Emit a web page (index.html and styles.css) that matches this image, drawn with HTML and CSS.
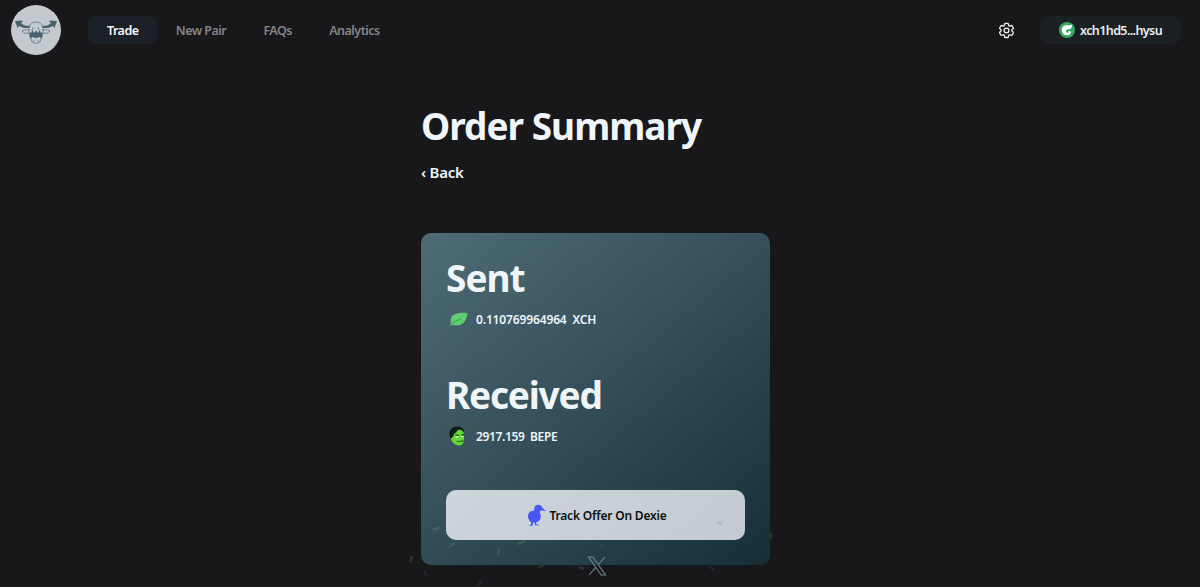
FILE: index.html
```
<!DOCTYPE html>
<html lang="en">
<head>
<meta charset="utf-8">
<title>Order Summary</title>
<link rel="stylesheet" href="styles.css">
</head>
<body>
<header class="topbar">
  <svg class="logo" viewBox="0 0 50 50">
    <circle cx="25" cy="25" r="25" fill="#c3c9cd"/>
    <g fill="#48616b">
      <path d="M4 16l8-.5-1.800 2.700c3 2.500 5.500 3 9.300 2.300l-1.500 2.400c-4.500.6-7.500-.4-9.500-2.200L6.500 23z"/>
      <path d="M46 16l-8-.5 1.800 2.700c-3 2.500-5.500 3-9.300 2.300l1.500 2.400c4.500.6 7.500-.4 9.500-2.200l2 2.300z"/>
      <path d="M18 27l2 1 1.500-2.500L23 28l2-2.500 2 2.500 1.500-2.500L30 28l2-1-1 6.500-2.500-1.500-3.500 1-3.500-1L19 33.500z"/>
    </g>
    <g fill="none" stroke="#607781" stroke-width=".8">
      <path d="M18 27v-5q2-5 7-5t7 5v5M21 26l1-4M28 26l-1-4"/>
      <path d="M18 25q-5-1-7 1 3 4 7 2M32 25q5-1 7 1-3 4-7 2"/>
      <path d="M19.500 32l1.500 5q4 3 8 0l1.500-5M22 36h1.500M26.500 36h1.500"/>
    </g>
  </svg>
  <nav class="nav">
    <a class="nav-item active">Trade</a>
    <a class="nav-item">New Pair</a>
    <a class="nav-item">FAQs</a>
    <a class="nav-item">Analytics</a>
  </nav>
  <svg class="gear" viewBox="0 0 24 24" fill="none" stroke="#f0f1f2" stroke-width="1.700" stroke-linejoin="round">
    <path d="M9.600 3.900c.1-.5.500-.9 1.100-.9h2.600c.5 0 1 .4 1.100.9l.2 1.300c.1.400.3.700.6.900l.3.100c.3.200.7.300 1.100.1l1.200-.5c.5-.2 1.100 0 1.400.5l1.300 2.200c.3.500.2 1.100-.3 1.400l-1 .8c-.3.300-.4.600-.4 1v.3c0 .4.100.7.400 1l1 .8c.4.400.5 1 .3 1.400l-1.300 2.300c-.3.500-.9.700-1.400.5l-1.200-.5c-.4-.1-.8-.1-1.100.1l-.3.100c-.3.200-.5.500-.6.900l-.2 1.300c-.1.500-.5.900-1.100.9h-2.600c-.5 0-1-.4-1.100-.9l-.2-1.300c-.1-.4-.3-.7-.6-.9l-.3-.1c-.3-.2-.7-.3-1.100-.1l-1.200.5c-.5.200-1.100 0-1.400-.5l-1.300-2.300c-.3-.5-.2-1.100.3-1.400l1-.8c.3-.3.400-.6.400-1v-.3c0-.4-.1-.7-.4-1l-1-.8c-.4-.4-.5-1-.3-1.400l1.300-2.200c.3-.5.900-.7 1.400-.5l1.200.5c.4.100.8.100 1.100-.1l.3-.1c.3-.2.500-.5.600-.9z"/>
    <circle cx="12" cy="12" r="3"/>
  </svg>
  <button class="wallet">
    <svg class="wallet-icon" viewBox="0 0 16 16">
      <circle cx="8" cy="8" r="8" fill="#3aa861"/>
      <path d="M2.800 8.500C2.500 5 5 3 8 3.300c2.500.3 3.500-.3 5-.5.300 2.500-1 4.500-3.500 4.500-1.600 0-2.500.9-2.500 2 0 1.200 1.200 1.700 2.500 1.200-.3-.8.200-1.400 1-1.400s1.500.6 1.300 1.800c-.4 1.500-2 2.400-3.800 2.400-3 0-5-2-5.200-4.800z" fill="#fff"/>
    </svg>
    <span>xch1hd5...hysu</span>
  </button>
</header>

<main class="page">
  <h1 class="title">Order Summary</h1>
  <a class="back">‹ Back</a>
  <section class="card">
    <h2 class="heading">Sent</h2>
    <div class="amount">
      <svg class="token" viewBox="0 0 24 20">
        <path d="M3.200 16.800C5 15.500 4.800 14 4.600 12 4.500 5.500 11 3.200 21.500 4 20.500 12.500 16.500 17.500 8.500 16.200 6.500 15.700 5 16.500 3.200 16.800z" fill="#5ece71"/>
        <path d="M3 17c4-4 8-5.500 12-7" fill="none" stroke="#3e8d5c" stroke-width=".8"/>
      </svg>
      <span class="amount-sent">0.110769964964&nbsp; XCH</span>
    </div>
    <h2 class="heading received">Received</h2>
    <div class="amount">
      <svg class="token" viewBox="0 0 24 20">
        <path d="M5 7c-1 6 1 11 7 12.500 4 .3 6-2.500 6-6.500l-.5-7C14 2 8 2 5 7z" fill="#64d936"/>
        <path d="M4.500 13C2 7 4 2 9 .8c5-1.300 9 1 9.500 6.200l-2.300-2.500C13 2.800 11.500 3.500 10.500 6L8 8l-1 3-1 .5z" fill="#101c18"/>
        <path d="M9 9l4 .3M15 9l3-.4" stroke="#18451b" stroke-width="1.200"/>
        <path d="M9.500 10.800h3M15 10.500h2.500" stroke="#e7f6de" stroke-width="1.200"/>
        <path d="M10.500 15q4 1.500 7-.6" fill="none" stroke="#23712a" stroke-width="1.300"/>
      </svg>
      <span class="amount-received">2917.159&nbsp; BEPE</span>
    </div>
    <a class="track">
      <svg class="duck" viewBox="0 0 20 22">
        <path d="M7.500 6C6.500 2.500 9 .5 11.500.7c2 .1 3.200 1.400 3.600 2.800L19 7.200l-4.500-1c-.9.600-1.700 1.300-1.600 2.500 2.300 5-.2 9-3.900 9.900l.2 1.600 2.300.4v.9L7.700 21l.2-2.200-1.700-.2-.6 1.900.8.800-3.200.6-.8-.7 1.500-.8.300-2C-.2 15.500.2 8.500 4 7.200 5.300 6.800 6.600 6.900 7.500 6z" fill="#4655f5"/>
      </svg>
      <span>Track Offer On Dexie</span>
    </a>
  </section>
</main>

<svg class="x-link" viewBox="0 0 20 20" fill="none" stroke="#71858c" stroke-width="1.100">
  <path d="M1.500 1h4.300l12.700 18h-4.300zM18 1l-7.200 8M8.800 11.300L2 19"/>
</svg>
<svg class="confetti" viewBox="0 0 1200 587">
  <g stroke-width="2.500">
    <path d="M433 530l7-3" stroke="#4f6c6f"/>
    <path d="M449 547l6-4M518 544l7-3M498 555l1-6" stroke="#476b55"/>
    <path d="M410 562l2-6M771 533v6" stroke="#3c443a"/>
    <path d="M424 571l3 5M479 586l2-6" stroke="#2b2f42"/>
    <path d="M538 567l7-2" stroke="#2c4136"/>
    <path d="M579 567l5 2M599 543l5 3" stroke="#20525a"/>
    <path d="M717 523h5" stroke="#bba9cc" stroke-width="4"/>
    <path d="M710 567l4 3" stroke="#322a4b"/>
  </g>
</svg>
</body>
</html>
```
FILE: styles.css
```
* { box-sizing: border-box; }
body {
  margin: 0;
  height: 587px;
  overflow: hidden;
  background: #18181a;
  color: #eff5f9;
  font-family: "Noto Sans", "Open Sans", sans-serif;
  white-space: nowrap;
}
.topbar {
  display: flex;
  align-items: center;
  height: 60px;
  padding: 0 19px 0 11px;
}
.logo { width: 50px; height: 50px; }
.nav { display: flex; margin-left: 27px; flex: 1; }
.nav-item {
  display: flex;
  align-items: center;
  height: 28px;
  padding: 0 18.300px 0 19px;
  border-radius: 8px;
  color: #848488;
  font-size: 12.500px;
  font-weight: 600;
  letter-spacing: -.53px;
}
.nav-item.active { background: #1b2127; color: #f4f6f8; }
.gear { width: 19px; height: 19px; margin-right: 24px; }
.wallet {
  display: flex;
  align-items: center;
  gap: 5px;
  width: 141px;
  height: 28px;
  padding: 0 0 0 19px;
  border: 0;
  border-radius: 9px;
  background: #1b2025;
  color: #e9edf2;
  font: 600 12.500px "Noto Sans", sans-serif;
  letter-spacing: -.6px;
}
.wallet-icon { width: 16px; height: 16px; }
.page { width: 349px; margin: 41px 0 0 421px; }
.title, .heading {
  margin: 0;
  height: 50px;
  font-size: 37px;
  line-height: 50px;
  font-weight: 700;
  letter-spacing: -1px;
}
.back {
  display: block;
  margin-top: 10px;
  height: 22px;
  font-size: 15px;
  line-height: 22px;
  font-weight: 600;
  letter-spacing: -.25px;
}
.card {
  height: 332px;
  margin-top: 50px;
  padding: 20px 25px 0;
  border-radius: 10px;
  background: linear-gradient(140deg, #4f6b75 0%, #36515b 45%, #152e37 100%);
}
.amount {
  display: flex;
  align-items: center;
  gap: 6px;
  height: 24px;
  margin-top: 4px;
  font-size: 12px;
  font-weight: 600;
}
.amount-sent { letter-spacing: -.14px; }
.amount-received { letter-spacing: -.36px; }
.token { width: 24px; height: 20px; }
.received { margin-top: 39px; letter-spacing: -1.200px; }
.track {
  display: flex;
  align-items: center;
  justify-content: center;
  gap: 2px;
  height: 50px;
  margin-top: 42px;
  padding-left: 3px;
  border-radius: 10px;
  background: linear-gradient(140deg, #ced5da, #c3cbd1);
  color: #0b1013;
  font-size: 12px;
  font-weight: 600;
  letter-spacing: -.2px;
}
.duck { width: 20px; height: 22px; }
.x-link { position: absolute; left: 587px; top: 556px; width: 20px; height: 20px; }
.confetti { position: absolute; inset: 0; width: 1200px; height: 587px; pointer-events: none; opacity: .6; }
```
